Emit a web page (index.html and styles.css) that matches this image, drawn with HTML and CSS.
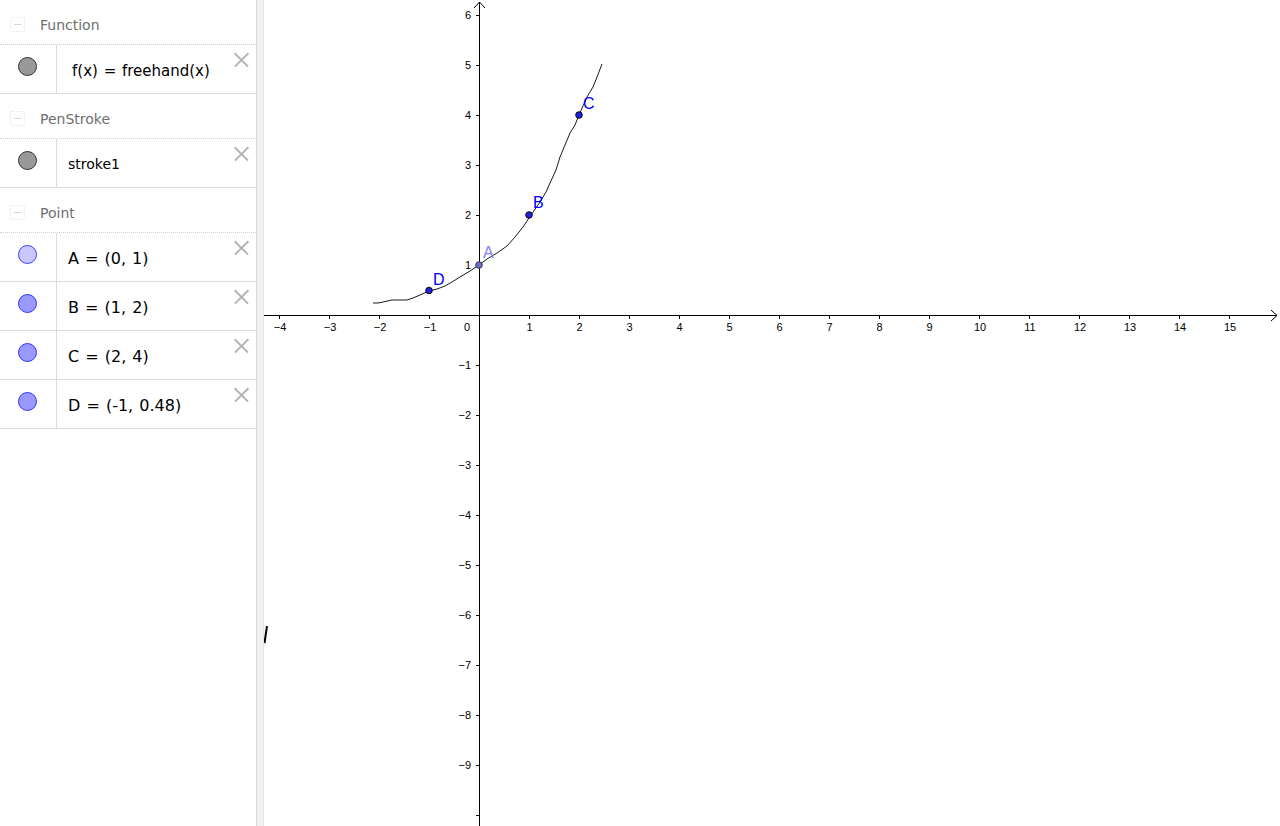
FILE: index.html
```html
<!DOCTYPE html>
<html>
<head>
<meta charset="utf-8">
<link rel="stylesheet" href="styles.css">
</head>
<body>
<div class="app">
  <div class="algebra">
    <div class="group">
      <div class="group-head"><span class="toggle">−</span><span class="group-title">Function</span></div>
      <div class="item">
        <div class="marble-cell"><span class="marble marble-gray"></span></div>
        <div class="item-text item-text-f">f(x) = freehand(x)</div>
        <span class="close"></span>
      </div>
    </div>
    <div class="group">
      <div class="group-head"><span class="toggle">−</span><span class="group-title">PenStroke</span></div>
      <div class="item">
        <div class="marble-cell"><span class="marble marble-gray"></span></div>
        <div class="item-text item-text-s">stroke1</div>
        <span class="close"></span>
      </div>
    </div>
    <div class="group">
      <div class="group-head"><span class="toggle">−</span><span class="group-title">Point</span></div>
      <div class="item">
        <div class="marble-cell"><span class="marble marble-light"></span></div>
        <div class="item-text">A = (0, 1)</div>
        <span class="close"></span>
      </div>
      <div class="item">
        <div class="marble-cell"><span class="marble marble-blue"></span></div>
        <div class="item-text">B = (1, 2)</div>
        <span class="close"></span>
      </div>
      <div class="item">
        <div class="marble-cell"><span class="marble marble-blue"></span></div>
        <div class="item-text">C = (2, 4)</div>
        <span class="close"></span>
      </div>
      <div class="item">
        <div class="marble-cell"><span class="marble marble-blue"></span></div>
        <div class="item-text">D = (-1, 0.48)</div>
        <span class="close"></span>
      </div>
    </div>
  </div>
  <div class="splitter"></div>
  <div class="graphics">
    <svg class="canvas" width="1016" height="826" viewBox="264 0 1016 826">
      <g class="axes" stroke="#000" stroke-width="1" fill="none">
        <line x1="264" y1="315.5" x2="1277" y2="315.5"/>
        <polyline points="1271,310 1277,315.5 1271,321"/>
        <line x1="479.5" y1="2" x2="479.5" y2="826"/>
        <polyline points="474,8 479.5,2 485,8"/>
        <path d="M279.5 315v4M329.5 315v4M379.5 315v4M429.5 315v4M529.5 315v4M579.5 315v4M629.5 315v4M679.5 315v4M729.5 315v4M779.5 315v4M829.5 315v4M879.5 315v4M929.5 315v4M979.5 315v4M1029.5 315v4M1079.5 315v4M1129.5 315v4M1179.5 315v4M1229.5 315v4"/>
        <path d="M476 15.5h4M476 65.5h4M476 115.5h4M476 165.5h4M476 215.5h4M476 265.5h4M476 365.5h4M476 415.5h4M476 465.5h4M476 515.5h4M476 565.5h4M476 615.5h4M476 665.5h4M476 715.5h4M476 765.5h4M476 815.5h4"/>
      </g>
      <g class="xlabels" text-anchor="middle">
        <text x="280" y="331">−4</text>
        <text x="330" y="331">−3</text>
        <text x="380" y="331">−2</text>
        <text x="430" y="331">−1</text>
        <text x="467" y="331">0</text>
        <text x="529.5" y="331">1</text>
        <text x="579.5" y="331">2</text>
        <text x="629.5" y="331">3</text>
        <text x="679.5" y="331">4</text>
        <text x="729.5" y="331">5</text>
        <text x="779.5" y="331">6</text>
        <text x="829.5" y="331">7</text>
        <text x="879.5" y="331">8</text>
        <text x="929.5" y="331">9</text>
        <text x="980" y="331">10</text>
        <text x="1030" y="331">11</text>
        <text x="1080" y="331">12</text>
        <text x="1130" y="331">13</text>
        <text x="1180" y="331">14</text>
        <text x="1230" y="331">15</text>
      </g>
      <g class="ylabels" text-anchor="end">
        <text x="471" y="19">6</text>
        <text x="471" y="69">5</text>
        <text x="471" y="119">4</text>
        <text x="471" y="169">3</text>
        <text x="471" y="219">2</text>
        <text x="471" y="269">1</text>
        <text x="471" y="369">−1</text>
        <text x="471" y="419">−2</text>
        <text x="471" y="469">−3</text>
        <text x="471" y="519">−4</text>
        <text x="471" y="569">−5</text>
        <text x="471" y="619">−6</text>
        <text x="471" y="669">−7</text>
        <text x="471" y="719">−8</text>
        <text x="471" y="769">−9</text>
      </g>
      <polyline class="curve" points="373,303 378,303 383,302 392,300 400,300 407,300 413,298 420,295 429,291 437,289 445,286 452,282 460,277 470,271 479,265 487,259 497,253 507,246 515,237 523,227 531,215 540,202 546,192 550,183 556,170 560,157 565,145 570,133 575,125 579,115 583,106 587,97 593,87 597,77 602,64"/>
      <path class="stroke-mark" d="M267 626 L265.5 636 L264.5 643"/>
      <circle class="pt-a" cx="479" cy="265" r="3.3"/>
      <circle class="pt" cx="529" cy="215" r="3.3"/>
      <circle class="pt" cx="579" cy="115" r="3.3"/>
      <circle class="pt" cx="429" cy="290.5" r="3.3"/>
      <text class="lbl lbl-a" x="483" y="258">A</text>
      <text class="lbl" x="533" y="208">B</text>
      <text class="lbl" x="583" y="109">C</text>
      <text class="lbl" x="433" y="285">D</text>
    </svg>
  </div>
</div>
</body>
</html>
```
FILE: styles.css
```css
html, body {
  margin: 0;
  padding: 0;
  background: #fff;
  overflow: hidden;
}

.app {
  display: flex;
  width: 1280px;
  height: 826px;
}

.algebra {
  width: 256px;
  flex: 0 0 256px;
  border-right: 1px solid #dadada;
  font-family: "DejaVu Sans", sans-serif;
  background: #fff;
}

.group-head {
  height: 45px;
  box-sizing: border-box;
  border-bottom: 1px dotted #cfcfcf;
  display: flex;
  align-items: center;
  padding-top: 5px;
}

.toggle {
  width: 13px;
  height: 13px;
  margin-left: 10px;
  margin-right: 15px;
  border: 1px dotted #e6e6e6;
  border-radius: 2px;
  color: #d8d8d8;
  font-size: 12px;
  line-height: 13px;
  text-align: center;
}

.group-title {
  font-size: 14px;
  color: #6f6f6f;
}

.item {
  position: relative;
  display: flex;
  height: 49px;
  box-sizing: border-box;
  border-bottom: 1px solid #dcdcdc;
}

.marble-cell {
  width: 57px;
  flex: 0 0 57px;
  box-sizing: border-box;
  border-right: 1px solid #dcdcdc;
  display: flex;
  justify-content: center;
  padding-top: 12px;
  padding-right: 1px;
}

.marble {
  width: 19px;
  height: 19px;
  border-radius: 50%;
  box-sizing: border-box;
}

.marble-gray {
  background: #999;
  border: 1px solid #333;
}

.marble-light {
  background: #c8c8ff;
  border: 1px solid #4040ff;
}

.marble-blue {
  background: #9999ff;
  border: 1px solid #3333ff;
}

.item-text {
  padding-left: 11px;
  padding-top: 16px;
  font-size: 16px;
  color: #000;
  white-space: pre;
  word-spacing: 1px;
}

.item-text-f {
  padding-left: 15px;
  font-size: 15px;
  padding-top: 17px;
}

.item-text-s {
  font-size: 14px;
  padding-top: 17px;
}

.close {
  position: absolute;
  right: 7px;
  top: 7px;
  width: 15px;
  height: 15px;
}

.close::before,
.close::after {
  content: "";
  position: absolute;
  left: -2px;
  top: 7px;
  width: 19px;
  height: 1.6px;
  background: #b4b4b4;
  transform: rotate(45deg);
}

.close::after {
  transform: rotate(-45deg);
}

.splitter {
  width: 6px;
  flex: 0 0 6px;
  background: #f2f2f2;
  border-right: 1px solid #e4e4e4;
}

.graphics {
  flex: 1;
  position: relative;
  overflow: hidden;
}

.canvas {
  display: block;
}

.xlabels text,
.ylabels text {
  font-family: "Liberation Sans", Arial, sans-serif;
  font-size: 11px;
  fill: #000;
}

.curve {
  fill: none;
  stroke: #000;
  stroke-width: 0.9;
  stroke-linejoin: round;
}

.stroke-mark {
  fill: none;
  stroke: #000;
  stroke-width: 2;
}

.pt {
  fill: #2020e0;
  stroke: #000;
  stroke-width: 0.9;
}

.pt-a {
  fill: #6b6bd8;
  stroke: #333;
  stroke-width: 0.9;
}

.lbl {
  font-family: "Liberation Sans", Arial, sans-serif;
  font-size: 16px;
  fill: #0000ff;
}

.lbl-a {
  fill: #8080ff;
}
```
